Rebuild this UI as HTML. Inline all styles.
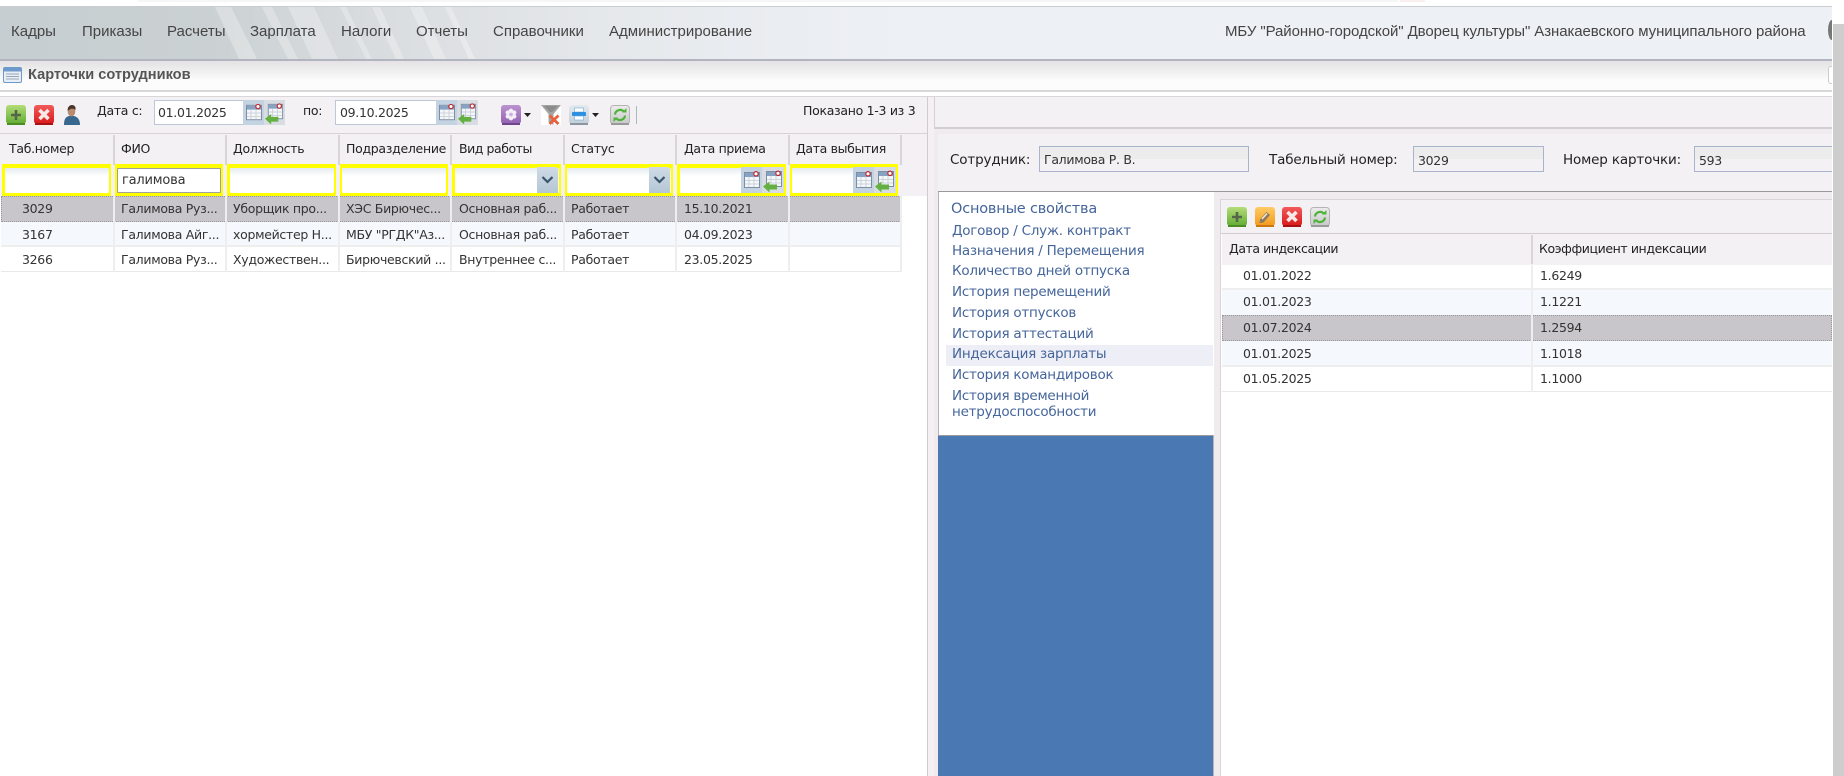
<!DOCTYPE html>
<html lang="ru"><head><meta charset="utf-8"><title>Карточки сотрудников</title>
<style>
html,body{margin:0;padding:0;background:#fff}
#p{position:relative;width:1844px;height:776px;overflow:hidden;background:#fff;font-family:"DejaVu Sans","Liberation Sans",sans-serif;font-size:12.5px;letter-spacing:-.3px;color:#333}
#p div,#p svg.i,#p span{position:absolute}
.t{white-space:nowrap;line-height:16px;height:16px}
.m{font-family:"Liberation Sans",sans-serif;font-size:15px;letter-spacing:0;color:#444;line-height:18px;height:18px;top:23px;white-space:nowrap}
.h{color:#222;top:141px}
.l{color:#45659b;font-size:13.5px;letter-spacing:-.25px;left:952px}
.y{top:164px;height:32px;background:#ff0}
.w{top:168px;height:25px;background:linear-gradient(#e6ebf0,#fff 8px);border-radius:1px}
.f{font-size:13.5px;letter-spacing:-.15px;color:#222;top:152px}
.r{left:1px;width:900px}
.s{width:2px;background:#eee}
.ro{left:1222px;width:610px}
.v{height:26px;background:linear-gradient(#ececec 50%,#f4f1f5 50%);border:1px solid #a8b4cc;box-sizing:border-box;top:146px}
</style></head><body><div id="p">
<svg width="0" height="0" style="position:absolute"><defs>
<linearGradient id="gg" x1="0" y1="0" x2="0" y2="1"><stop offset="0" stop-color="#b4dc78"/><stop offset="1" stop-color="#62ac34"/></linearGradient>
<linearGradient id="gr" x1="0" y1="0" x2="0" y2="1"><stop offset="0" stop-color="#f25a5a"/><stop offset="1" stop-color="#d81a1a"/></linearGradient>
<linearGradient id="go" x1="0" y1="0" x2="0" y2="1"><stop offset="0" stop-color="#ffcb66"/><stop offset="1" stop-color="#f29a1c"/></linearGradient>
<linearGradient id="gp" x1="0" y1="0" x2="0" y2="1"><stop offset="0" stop-color="#bb93cf"/><stop offset="1" stop-color="#9362b2"/></linearGradient>
<linearGradient id="ga" x1="0" y1="0" x2="0" y2="1"><stop offset="0" stop-color="#ececec"/><stop offset="1" stop-color="#c8c8c8"/></linearGradient>
<linearGradient id="gb" x1="0" y1="0" x2="0" y2="1"><stop offset="0" stop-color="#e4eaf0"/><stop offset="1" stop-color="#c4ced8"/></linearGradient>
<symbol id="add" viewBox="0 0 20 20"><rect width="20" height="19" rx="3" fill="url(#gg)"/><path d="M1 19h18" stroke="#4d8c22" stroke-width="2"/><path d="M10 5v10M5 10h10" stroke="#56664a" stroke-width="2.600"/></symbol>
<symbol id="del" viewBox="0 0 20 20"><rect width="20" height="19" rx="3" fill="url(#gr)"/><path d="M1 19h18" stroke="#a81212" stroke-width="2"/><path d="M5.500 5l9 9M14.500 5l-9 9" stroke="#fde8e8" stroke-width="3.600"/></symbol>
<symbol id="edit" viewBox="0 0 20 20"><rect width="20" height="19" rx="3" fill="url(#go)"/><path d="M1 19h18" stroke="#c87810" stroke-width="2"/><path d="M5 12.500l6.500-7.500 3.500 3-6.500 7.500-4 .5z" fill="#8a7a60"/><path d="M7 12l5-5.500" stroke="#f8ecd2" stroke-width="1.400"/></symbol>
<symbol id="ref" viewBox="0 0 20 20"><rect x=".5" y=".5" width="19" height="18.500" rx="3" fill="url(#ga)" stroke="#b4b4b4"/><path d="M1 19h18" stroke="#9a9a9a" stroke-width="2"/><path d="M5 9.500a5 5 0 0 1 9-2.500M15 10.500a5 5 0 0 1-9 2.500" fill="none" stroke="#4eb33a" stroke-width="2.200"/><path d="M12 7.500h4.500v-4.500zM8 12.500h-4.500v4.500z" fill="#4eb33a"/></symbol>
<symbol id="pur" viewBox="0 0 20 20"><rect width="20" height="19" rx="3" fill="url(#gp)"/><path d="M1 19h18" stroke="#6f4590" stroke-width="2"/><g fill="#f4eef8"><circle cx="10" cy="5.800" r="2.200"/><circle cx="10" cy="13.200" r="2.200"/><circle cx="6.800" cy="7.600" r="2.200"/><circle cx="13.200" cy="7.600" r="2.200"/><circle cx="6.800" cy="11.400" r="2.200"/><circle cx="13.200" cy="11.400" r="2.200"/></g><circle cx="10" cy="9.500" r="1.700" fill="#cdb0dc"/></symbol>
<symbol id="prn" viewBox="0 0 20 20"><rect width="20" height="19" rx="3" fill="url(#gb)"/><path d="M1 19h18" stroke="#8a96a2" stroke-width="2"/><rect x="5.500" y="3" width="9" height="4" fill="#fff" stroke="#6aa8dc" stroke-width=".6"/><rect x="3" y="7" width="14" height="4" rx="1" fill="#2c8fe0"/><rect x="5.500" y="11" width="9" height="4" fill="#fff" stroke="#6aa8dc" stroke-width=".6"/></symbol>
<symbol id="flt" viewBox="0 0 20 20"><rect width="20" height="20" fill="#fff"/><path d="M0 0h20l-7.500 9v11l-5-3v-8z" fill="#a4a4a4"/><path d="M3 1h14l-6 6h-2z" fill="#8c8c8c"/><path d="M8.500 10.500l9 8.500M17.500 10.500l-9 8.500" stroke="#e8603c" stroke-width="2.800"/></symbol>
<symbol id="usr" viewBox="0 0 16 20"><path d="M0 20c0-5 1-8 5-9h5c4 1 6 4 6 9z" fill="#39688f"/><ellipse cx="7.500" cy="6.500" rx="3.800" ry="5" fill="#b88c70"/><path d="M3.700 6c-.5-4 2-6 4.300-6s4.500 2 3.300 5c-2-2-4.600-2-7.600 1z" fill="#4a3628"/></symbol>
<symbol id="cal" viewBox="0 0 21 26"><rect width="21" height="26" fill="#c3d3e1"/><rect x="3.500" y="5.500" width="15" height="15" fill="#f4f6f8" stroke="#7d8ea4"/><rect x="4" y="6" width="14" height="4" fill="#86a2c4"/><path d="M8 10v10M13 10v10M4 13.500h14M4 17h14" stroke="#c4ccd6" stroke-width=".8"/><circle cx="15" cy="6.800" r="2.200" fill="#fff" stroke="#c02830" stroke-width="1.200"/></symbol>
<symbol id="cal2" viewBox="0 0 22 26"><rect width="22" height="26" fill="#d8dde4"/><rect x="4.500" y="4.500" width="15" height="15" fill="#f4f6f8" stroke="#7d8ea4"/><rect x="5" y="5" width="14" height="4" fill="#86a2c4"/><path d="M9 9v10M14 9v10M5 12.500h14M5 16h14" stroke="#c4ccd6" stroke-width=".8"/><circle cx="16" cy="6.300" r="2.200" fill="#fff" stroke="#c02830" stroke-width="1.200"/><path d="M1 19.500l6.500-5v3h7.500v5h-7.500v3z" fill="#64b040"/></symbol>
<symbol id="lst" viewBox="0 0 19 16"><rect x=".5" y=".5" width="18" height="15" rx="1.500" fill="#e8eef6" stroke="#6e9acb"/><rect x="1" y="1" width="17" height="3.500" fill="#6e9acb"/><path d="M3 7h13M3 9.500h13M3 12h13" stroke="#98a8b8"/></symbol>
</defs></svg>

<!-- top strip -->
<div style="left:138px;top:0;width:1260px;height:2px;background:#f6f6f6"></div>
<div style="left:1400px;top:0;width:25px;height:2px;background:#fbeeee"></div>
<!-- menu -->
<div style="left:0;top:6px;width:1832px;height:55px;background:linear-gradient(90deg,#c6ced1 0,#cbd1d3 210px,#dcdfe2 420px,#e6e9ec 620px,#edf0f5 900px);border-top:1px solid #c9cdd0;border-bottom:2px solid #b2b5bf;box-sizing:border-box"></div>
<svg class="i" style="left:0;top:7px" width="800" height="52"><g fill="#fff" opacity=".28"><path d="M215 0h16l26 52h-18z"/><path d="M262 0h10l26 52h-10z"/><path d="M288 0h26l24 52h-26z"/><path d="M340 0h6l26 52h-6z"/><path d="M372 0h8l24 52h-8z"/><path d="M410 0h12l24 52h-12z"/><path d="M445 0h6l24 52h-6z"/></g></svg>
<div class="m" style="left:11px">Кадры</div>
<div class="m" style="left:82px">Приказы</div>
<div class="m" style="left:167px">Расчеты</div>
<div class="m" style="left:250px">Зарплата</div>
<div class="m" style="left:341px">Налоги</div>
<div class="m" style="left:416px">Отчеты</div>
<div class="m" style="left:493px">Справочники</div>
<div class="m" style="left:609px">Администрирование</div>
<div class="m" style="left:1225px;letter-spacing:-.08px">МБУ "Районно-городской" Дворец культуры" Азнакаевского муниципального района</div>
<div style="left:1828px;top:20px;width:4px;height:20px;background:#777;border-radius:4px 0 0 4px/10px 0 0 10px"></div>
<!-- title -->
<div style="left:0;top:61px;width:1832px;height:31px;background:linear-gradient(#e4e2e4,#f4f4f4 14px,#fdfdfd 20px,#fbfbfb);border-bottom:2px solid #d8d6d8;box-sizing:border-box"></div>
<svg class="i" style="left:3px;top:67px" width="19" height="16"><use href="#lst"/></svg>
<div class="t" style="left:28px;top:67px;font:bold 14.6px/16px 'Liberation Sans',sans-serif;letter-spacing:0;color:#555">Карточки сотрудников</div>
<div style="left:1828px;top:66px;width:4px;height:18px;background:#fff;border:1px solid #ccc;border-right:0;border-radius:3px 0 0 3px;box-sizing:border-box"></div>
<!-- left panel -->
<div style="left:0;top:96px;width:1832px;height:1px;background:#d8d6d8"></div>
<div style="left:0;top:97px;width:927px;height:99px;background:#f4f1f5"></div>
<div style="left:0;top:133px;width:927px;height:1px;background:#d6d2d6"></div>
<svg class="i" style="left:6px;top:105px" width="20" height="20"><use href="#add"/></svg>
<svg class="i" style="left:34px;top:105px" width="20" height="20"><use href="#del"/></svg>
<svg class="i" style="left:64px;top:105px" width="16" height="20"><use href="#usr"/></svg>
<div class="t" style="left:97px;top:103px;color:#222">Дата с:</div>
<div style="left:154px;top:100px;width:131px;height:25px;background:#fff;border:1px solid #bcc8d8;box-sizing:border-box"></div>
<div class="t" style="left:158px;top:105px">01.01.2025</div>
<svg class="i" style="left:243px;top:100px" width="21" height="25" preserveAspectRatio="none" viewBox="0 0 21 26"><use href="#cal" width="21" height="26"/></svg>
<svg class="i" style="left:264px;top:100px" width="21" height="25" preserveAspectRatio="none" viewBox="0 0 22 26"><use href="#cal2" width="22" height="26"/></svg>
<div class="t" style="left:303px;top:103px;color:#222">по:</div>
<div style="left:335px;top:100px;width:143px;height:25px;background:#fff;border:1px solid #bcc8d8;box-sizing:border-box"></div>
<div class="t" style="left:340px;top:105px">09.10.2025</div>
<svg class="i" style="left:436px;top:100px" width="21" height="25" preserveAspectRatio="none" viewBox="0 0 21 26"><use href="#cal" width="21" height="26"/></svg>
<svg class="i" style="left:457px;top:100px" width="21" height="25" preserveAspectRatio="none" viewBox="0 0 22 26"><use href="#cal2" width="22" height="26"/></svg>
<svg class="i" style="left:501px;top:105px" width="20" height="20"><use href="#pur"/></svg>
<svg class="i" style="left:524px;top:113px" width="7" height="4"><path d="M0 0h7l-3.500 4z" fill="#222"/></svg>
<svg class="i" style="left:541px;top:105px" width="20" height="20"><use href="#flt"/></svg>
<svg class="i" style="left:569px;top:105px" width="20" height="20"><use href="#prn"/></svg>
<svg class="i" style="left:592px;top:113px" width="7" height="4"><path d="M0 0h7l-3.500 4z" fill="#222"/></svg>
<svg class="i" style="left:610px;top:105px" width="20" height="20"><use href="#ref"/></svg>
<div style="left:636px;top:106px;width:1px;height:18px;background:#a8bcb8"></div>
<div class="t" style="left:803px;top:103px;color:#222">Показано 1-3 из 3</div>
<!-- left grid header -->
<div class="t h" style="left:9px">Таб.номер</div>
<div class="t h" style="left:121px">ФИО</div>
<div class="t h" style="left:233px">Должность</div>
<div class="t h" style="left:346px">Подразделение</div>
<div class="t h" style="left:459px;letter-spacing:-.45px">Вид работы</div>
<div class="t h" style="left:571px">Статус</div>
<div class="t h" style="left:684px;letter-spacing:-.35px">Дата приема</div>
<div class="t h" style="left:796px;letter-spacing:-.35px">Дата выбытия</div>
<div class="s" style="left:113px;top:135px;height:30px;background:#d8d4d8"></div>
<div class="s" style="left:225px;top:135px;height:30px;background:#d8d4d8"></div>
<div class="s" style="left:338px;top:135px;height:30px;background:#d8d4d8"></div>
<div class="s" style="left:450px;top:135px;height:30px;background:#d8d4d8"></div>
<div class="s" style="left:563px;top:135px;height:30px;background:#d8d4d8"></div>
<div class="s" style="left:675px;top:135px;height:30px;background:#d8d4d8"></div>
<div class="s" style="left:788px;top:135px;height:30px;background:#d8d4d8"></div>
<div class="s" style="left:900px;top:135px;height:30px;background:#d8d4d8"></div>
<!-- filters -->
<div class="y" style="left:2px;width:109px"></div><div class="w" style="left:5px;width:104px"></div>
<div class="y" style="left:115px;width:108px"></div><div class="w" style="left:117px;width:104px;background:#fff;border:1px solid #a0a0a0;box-sizing:border-box"></div>
<div class="t" style="left:122px;top:173px;font-size:13px;letter-spacing:-.2px">галимова</div>
<div class="y" style="left:227px;width:109px"></div><div class="w" style="left:230px;width:104px"></div>
<div class="y" style="left:340px;width:108px"></div><div class="w" style="left:342px;width:104px"></div>
<div class="y" style="left:452px;width:109px"></div><div class="w" style="left:455px;width:104px"></div>
<div style="left:537px;top:167px;width:21px;height:26px;background:linear-gradient(#cfdbe6,#b4c6d6);border-radius:0 3px 0 0"></div>
<svg class="i" style="left:541px;top:176px" width="13" height="8"><path d="M1.500 1l5 5 5-5" fill="none" stroke="#3c5468" stroke-width="2.200"/></svg>
<div class="y" style="left:565px;width:108px"></div><div class="w" style="left:567px;width:104px"></div>
<div style="left:649px;top:167px;width:21px;height:26px;background:linear-gradient(#cfdbe6,#b4c6d6);border-radius:0 3px 0 0"></div>
<svg class="i" style="left:653px;top:176px" width="13" height="8"><path d="M1.500 1l5 5 5-5" fill="none" stroke="#3c5468" stroke-width="2.200"/></svg>
<div class="y" style="left:677px;width:109px"></div><div class="w" style="left:680px;width:104px"></div>
<svg class="i" style="left:741px;top:167px" width="21" height="26"><use href="#cal"/></svg>
<svg class="i" style="left:762px;top:167px" width="22" height="26"><use href="#cal2"/></svg>
<div class="y" style="left:790px;width:108px"></div><div class="w" style="left:792px;width:104px"></div>
<svg class="i" style="left:853px;top:167px" width="21" height="26"><use href="#cal"/></svg>
<svg class="i" style="left:874px;top:167px" width="22" height="26"><use href="#cal2"/></svg>
<!-- left rows -->
<div class="r" style="top:196px;height:26px;background:#c8c6ca;border:1px dotted #999;box-sizing:border-box"></div>
<div class="r" style="top:222px;height:25px;background:#f5f9fe;border-bottom:2px solid #eeeeee;box-sizing:border-box"></div>
<div class="r" style="top:247px;height:25px;background:#fff;border-bottom:1px solid #e8e8e8;box-sizing:border-box"></div>
<div class="s" style="left:113px;top:196px;height:76px"></div>
<div class="s" style="left:225px;top:196px;height:76px"></div>
<div class="s" style="left:338px;top:196px;height:76px"></div>
<div class="s" style="left:450px;top:196px;height:76px"></div>
<div class="s" style="left:563px;top:196px;height:76px"></div>
<div class="s" style="left:675px;top:196px;height:76px"></div>
<div class="s" style="left:788px;top:196px;height:76px"></div>
<div class="s" style="left:900px;top:196px;height:76px"></div>

<div class="t" style="left:22px;top:201px">3029</div><div class="t" style="left:121px;top:201px">Галимова Руз...</div><div class="t" style="left:233px;top:201px">Уборщик про...</div><div class="t" style="left:346px;top:201px">ХЭС Бирючес...</div><div class="t" style="left:459px;top:201px">Основная раб...</div><div class="t" style="left:571px;top:201px">Работает</div><div class="t" style="left:684px;top:201px">15.10.2021</div>
<div class="t" style="left:22px;top:227px">3167</div><div class="t" style="left:121px;top:227px">Галимова Айг...</div><div class="t" style="left:233px;top:227px">хормейстер Н...</div><div class="t" style="left:346px;top:227px">МБУ "РГДК"Аз...</div><div class="t" style="left:459px;top:227px">Основная раб...</div><div class="t" style="left:571px;top:227px">Работает</div><div class="t" style="left:684px;top:227px">04.09.2023</div>
<div class="t" style="left:22px;top:252px">3266</div><div class="t" style="left:121px;top:252px">Галимова Руз...</div><div class="t" style="left:233px;top:252px">Художествен...</div><div class="t" style="left:346px;top:252px">Бирючевский ...</div><div class="t" style="left:459px;top:252px">Внутреннее с...</div><div class="t" style="left:571px;top:252px">Работает</div><div class="t" style="left:684px;top:252px">23.05.2025</div>

<!-- splitter -->
<div style="left:927px;top:97px;width:1px;height:679px;background:#cfcbcf"></div>
<div style="left:928px;top:97px;width:6px;height:679px;background:#f4f0f4"></div>
<div style="left:934px;top:97px;width:1px;height:32px;background:#d4d0d4"></div>
<!-- right panel -->
<div style="left:935px;top:97px;width:897px;height:32px;background:#f4f1f5;border-bottom:2px solid #d2ced2;box-sizing:border-box"></div>
<div style="left:934px;top:129px;width:898px;height:647px;background:#efebef"></div>
<div style="left:938px;top:134px;width:894px;height:57px;background:#f4f1f5"></div>
<div style="left:938px;top:191px;width:894px;height:1px;background:#999"></div>
<div class="t f" style="left:950px">Сотрудник:</div>
<div class="v" style="left:1039px;width:210px"></div>
<div class="t" style="left:1044px;top:152px">Галимова Р. В.</div>
<div class="t f" style="left:1269px">Табельный номер:</div>
<div class="v" style="left:1413px;width:131px"></div>
<div class="t" style="left:1418px;top:153px">3029</div>
<div class="t f" style="left:1563px">Номер карточки:</div>
<div class="v" style="left:1694px;width:139px;border-right:0"></div>
<div class="t" style="left:1699px;top:153px">593</div>
<!-- tree -->
<div style="left:938px;top:192px;width:276px;height:243px;background:#fff;border-left:1px solid #b4b4b8;box-sizing:border-box"></div>
<div style="left:938px;top:435px;width:275px;height:341px;background:#4a78b2;border-top:1px solid #9a9aa0;box-sizing:border-box"></div>
<div style="left:1213px;top:435px;width:1px;height:341px;background:#b8b4b8"></div>
<div style="left:946px;top:345px;width:267px;height:21px;background:#edeef6"></div>
<div class="t l" style="left:951px;top:201px;font-size:14.5px;letter-spacing:-.2px">Основные свойства</div>
<div class="t l" style="top:223px">Договор / Служ. контракт</div>
<div class="t l" style="top:243px">Назначения / Перемещения</div>
<div class="t l" style="top:263px">Количество дней отпуска</div>
<div class="t l" style="top:284px">История перемещений</div>
<div class="t l" style="top:305px">История отпусков</div>
<div class="t l" style="top:326px">История аттестаций</div>
<div class="t l" style="top:346px">Индексация зарплаты</div>
<div class="t l" style="top:367px">История командировок</div>
<div class="t l" style="top:388px">История временной</div>
<div class="t l" style="top:404px">нетрудоспособности</div>
<!-- inner grid -->
<div style="left:1220px;top:199px;width:612px;height:577px;background:#fff;border:1px solid #d8d4d8;border-right:0;border-bottom:0;box-sizing:border-box"></div>
<div style="left:1221px;top:200px;width:611px;height:33px;background:#f4f1f5;border-bottom:1px solid #d0ccd0"></div>
<svg class="i" style="left:1227px;top:207px" width="20" height="20"><use href="#add"/></svg>
<svg class="i" style="left:1255px;top:207px" width="20" height="20"><use href="#edit"/></svg>
<svg class="i" style="left:1282px;top:207px" width="20" height="20"><use href="#del"/></svg>
<svg class="i" style="left:1310px;top:207px" width="20" height="20"><use href="#ref"/></svg>
<div style="left:1222px;top:234px;width:610px;height:31px;background:#f4f1f5"></div>
<div class="t" style="left:1229px;top:241px;color:#222;letter-spacing:-.45px">Дата индексации</div>
<div class="t" style="left:1539px;top:241px;color:#222;letter-spacing:-.4px">Коэффициент индексации</div>
<div class="s" style="left:1531px;top:235px;height:29px;background:#d8d4d8"></div>
<div class="ro" style="top:265px;height:25px;background:#fff;border-bottom:2px solid #eeeeee;box-sizing:border-box"></div>
<div class="ro" style="top:290px;height:25px;background:#f5f9fe"></div>
<div class="ro" style="top:315px;height:26px;background:#c8c6ca;border:1px dotted #999;box-sizing:border-box"></div>
<div class="ro" style="top:341px;height:26px;background:#f5f9fe;border-bottom:2px solid #eeeeee;box-sizing:border-box"></div>
<div class="ro" style="top:367px;height:25px;background:#fff;border-bottom:1px solid #e8e8e8;box-sizing:border-box"></div>
<div class="s" style="left:1531px;top:265px;height:127px"></div>
<div class="t" style="left:1243px;top:268px">01.01.2022</div><div class="t" style="left:1540px;top:268px">1.6249</div>
<div class="t" style="left:1243px;top:294px">01.01.2023</div><div class="t" style="left:1540px;top:294px">1.1221</div>
<div class="t" style="left:1243px;top:320px">01.07.2024</div><div class="t" style="left:1540px;top:320px">1.2594</div>
<div class="t" style="left:1243px;top:346px">01.01.2025</div><div class="t" style="left:1540px;top:346px">1.1018</div>
<div class="t" style="left:1243px;top:371px">01.05.2025</div><div class="t" style="left:1540px;top:371px">1.1000</div>
<!-- scrollbar -->
<div style="left:1832px;top:0;width:1px;height:776px;background:#fff"></div>
<div style="left:1833px;top:24px;width:11px;height:752px;background:#cdcdcd"></div>
</div></body></html>
